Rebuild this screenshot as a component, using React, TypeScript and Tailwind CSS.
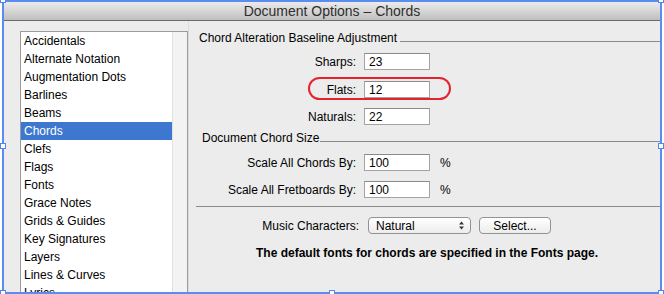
import React from "react";

const items = [
  "Accidentals",
  "Alternate Notation",
  "Augmentation Dots",
  "Barlines",
  "Beams",
  "Chords",
  "Clefs",
  "Flags",
  "Fonts",
  "Grace Notes",
  "Grids & Guides",
  "Key Signatures",
  "Layers",
  "Lines & Curves",
  "Lyrics",
];

function Field({ value }: { value: string }) {
  return (
    <div className="ml-[8px] w-[66px] h-[17px] bg-white border border-[#a3a3a3] border-t-[#8a8a8a] flex items-center pl-[4px] text-[12px] leading-none text-black">
      {value}
    </div>
  );
}

function Handle({ cls }: { cls: string }) {
  return <div className={`absolute w-[6px] h-[6px] bg-white border border-[#4f86f0] ${cls}`} />;
}

export default function App() {
  return (
    <div
      className="relative w-[664px] h-[294px] bg-white overflow-hidden"
      style={{ fontFamily: '"Liberation Sans", Arial, sans-serif' }}
    >
      <div className="ml-[2px] w-[660px] h-[294px] border-2 border-[#5b8df0] flex flex-col overflow-hidden">
        {/* title bar */}
        <div className="h-[19px] shrink-0 bg-gradient-to-b from-[#ececec] to-[#bfbfbf] border-b border-[#6b6b6b] flex items-center justify-center text-[14px] text-[#2e2e2e] leading-none">
          Document Options – Chords
        </div>
        {/* body */}
        <div className="flex-1 bg-[#ececec] flex overflow-hidden">
          {/* list */}
          <div className="ml-[16px] mt-[10px] w-[168px] h-[300px] shrink-0 border border-[#9c9c9c] flex">
            <div className="w-[151px] bg-white flex flex-col">
              {items.map((t) => (
                <div
                  key={t}
                  className={`h-[18px] shrink-0 flex items-center pl-[3px] text-[12px] leading-none ${
                    t === "Chords" ? "bg-[#3d77d0] text-white" : "text-black"
                  }`}
                >
                  {t}
                </div>
              ))}
            </div>
            <div className="flex-1 bg-[#f3f3f3] border-l border-[#e2e2e2]" />
          </div>
          {/* right panel */}
          <div className="flex-1 flex flex-col pr-[6px] text-[12px] text-black leading-none border-l border-[#dcdcdc]">
            <div className="mt-[10px] h-[15px] flex items-end pl-[10px]">
              <span className="leading-[15px]">Chord Alteration Baseline Adjustment</span>
              <div className="flex-1 h-px bg-[#8a8a8a] ml-[3px] mb-[4px]" />
            </div>
            <div className="mt-[7px] h-[17px] flex items-center">
              <div className="w-[167px] text-right">Sharps:</div>
              <Field value="23" />
            </div>
            <div className="relative mt-[11px] h-[17px] flex items-center">
              <div className="w-[167px] text-right">Flats:</div>
              <Field value="12" />
              <div className="absolute left-[119px] top-[-4px] w-[143px] h-[23px] rounded-full border-[2.5px] border-[#e5232c]" />
            </div>
            <div className="mt-[10px] h-[17px] flex items-center">
              <div className="w-[167px] text-right">Naturals:</div>
              <Field value="22" />
            </div>
            <div className="mt-[6px] h-[15px] flex items-end pl-[13px]">
              <span className="leading-[15px]">Document Chord Size</span>
              <div className="flex-1 h-px bg-[#8a8a8a] ml-[1px] mb-[4px]" />
            </div>
            <div className="mt-[8px] h-[17px] flex items-center">
              <div className="w-[167px] text-right">Scale All Chords By:</div>
              <Field value="100" />
              <span className="ml-[10px]">%</span>
            </div>
            <div className="mt-[10px] h-[17px] flex items-center">
              <div className="w-[167px] text-right">Scale All Fretboards By:</div>
              <Field value="100" />
              <span className="ml-[10px]">%</span>
            </div>
            <div className="mt-[8px] ml-[7px] h-px bg-[#8a8a8a]" />
            <div className="mt-[10px] h-[17px] flex items-center">
              <div className="w-[170px] text-right">Music Characters:</div>
              <div className="ml-[9px] w-[103px] h-[17px] rounded-[4px] border border-[#929292] bg-gradient-to-b from-white to-[#ededed] flex items-center pl-[7px] pr-[6px]">
                <span className="flex-1">Natural</span>
                <svg width="5" height="9" viewBox="0 0 5 9">
                  <path d="M2.5 0.5 L5 3.5 L0 3.5 Z" fill="#333" />
                  <path d="M2.5 8.5 L5 5.5 L0 5.5 Z" fill="#333" />
                </svg>
              </div>
              <div className="ml-[8px] w-[72px] h-[17px] rounded-[4px] border border-[#929292] bg-gradient-to-b from-white to-[#ededed] flex items-center justify-center">
                Select...
              </div>
            </div>
            <div className="mt-[12px] w-[476px] text-center font-bold text-[12px] leading-[15px]">
              The default fonts for chords are specified in the Fonts page.
            </div>
          </div>
        </div>
      </div>
      <Handle cls="left-0 top-[-3px]" />
      <Handle cls="left-[658px] top-[-3px]" />
      <Handle cls="left-0 top-[143px]" />
      <Handle cls="left-[658px] top-[143px]" />
      <Handle cls="left-0 top-[290px]" />
      <Handle cls="left-[329px] top-[290px]" />
      <Handle cls="left-[658px] top-[290px]" />
    </div>
  );
}
